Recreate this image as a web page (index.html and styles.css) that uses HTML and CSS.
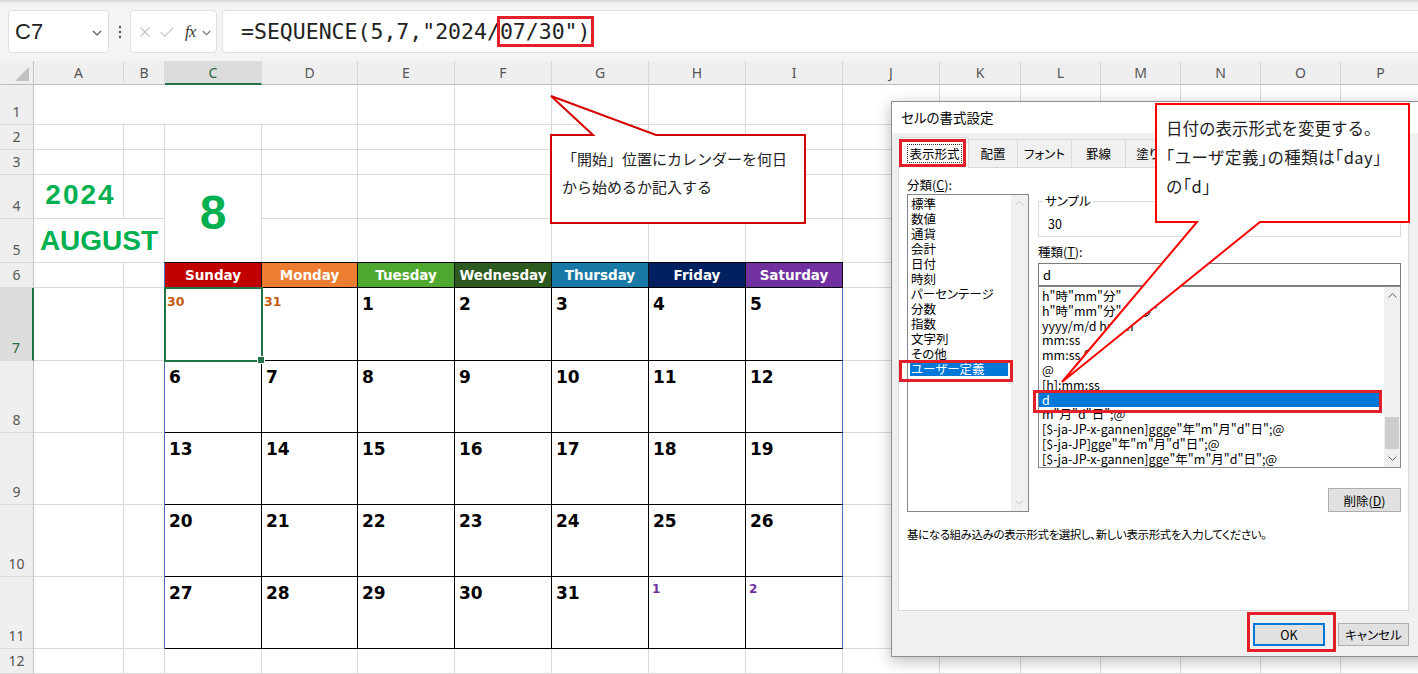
FILE: index.html
```html
<!DOCTYPE html>
<html lang="ja">
<head>
<meta charset="utf-8">
<title>カレンダー - セルの書式設定</title>
<link rel="stylesheet" href="styles.css">
</head>
<body>
<header class="fbar">
  <div class="box namebox">
    <span class="nb-text">C7</span>
    <svg class="chev" width="10" height="6" viewBox="0 0 10 6"><path d="M1 1l4 4 4-4" fill="none" stroke="#555" stroke-width="1.2"/></svg>
  </div>
  <div class="dots">
    <svg width="4" height="14" viewBox="0 0 4 14"><circle cx="2" cy="2" r="1.2" fill="#555"/><circle cx="2" cy="7" r="1.2" fill="#555"/><circle cx="2" cy="12" r="1.2" fill="#555"/></svg>
  </div>
  <div class="box fxbox">
    <svg class="ic-x" width="10" height="10" viewBox="0 0 10 10"><path d="M0.5 0.5l9 9M9.5 0.5l-9 9" stroke="#c4c4c4" stroke-width="1.2"/></svg>
    <svg class="ic-ok" width="14" height="10" viewBox="0 0 14 10"><path d="M0.8 5.2l4 4 8.4-8.6" fill="none" stroke="#c4c4c4" stroke-width="1.2"/></svg>
    <span class="fx">fx</span>
    <svg class="ic-dd" width="9" height="6" viewBox="0 0 9 6"><path d="M0.8 1l3.7 3.7 3.7-3.7" fill="none" stroke="#777" stroke-width="1.1"/></svg>
  </div>
  <div class="box formula"><span>=SEQUENCE(5,7,"2024/</span><span class="hl">07/30")</span></div>
</header>

<main class="sheet">
  <div class="corner"><span class="tri"></span></div>
  <div class="ch">A</div>
  <div class="ch">B</div>
  <div class="ch sel">C</div>
  <div class="ch">D</div>
  <div class="ch">E</div>
  <div class="ch">F</div>
  <div class="ch">G</div>
  <div class="ch">H</div>
  <div class="ch">I</div>
  <div class="ch">J</div>
  <div class="ch">K</div>
  <div class="ch">L</div>
  <div class="ch">M</div>
  <div class="ch">N</div>
  <div class="ch">O</div>
  <div class="ch">P</div>

  <div class="rh">1</div>
  <div class="cell merged-a1"></div>
  <i></i><i></i><i></i><i></i><i></i><i></i><i></i><i></i><i></i><i></i><i></i><i></i>

  <div class="rh">2</div>
  <i></i><i></i><i></i><i></i><i></i><i></i><i></i><i></i><i></i><i></i><i></i><i></i><i></i><i></i><i></i><i></i>

  <div class="rh">3</div>
  <i></i><i></i><i></i><i></i><i></i><i></i><i></i><i></i><i></i><i></i><i></i><i></i><i></i><i></i><i></i><i></i>

  <div class="rh">4</div>
  <div class="cell year">2024</div>
  <i></i>
  <div class="cell bignum">8</div>
  <i></i><i></i><i></i><i></i><i></i><i></i><i></i><i></i><i></i><i></i><i></i><i></i><i></i>

  <div class="rh">5</div>
  <div class="cell month">AUGUST</div>
  <i></i><i></i><i></i><i></i><i></i><i></i><i></i><i></i><i></i><i></i><i></i><i></i><i></i>

  <div class="rh">6</div>
  <i></i><i></i>
  <div class="cal">
    <div class="wd sun">Sunday</div>
    <div class="wd mon">Monday</div>
    <div class="wd tue">Tuesday</div>
    <div class="wd wed">Wednesday</div>
    <div class="wd thu">Thursday</div>
    <div class="wd fri">Friday</div>
    <div class="wd sat">Saturday</div>

    <div class="day prev sel">30</div>
    <div class="day prev">31</div>
    <div class="day">1</div>
    <div class="day">2</div>
    <div class="day">3</div>
    <div class="day">4</div>
    <div class="day">5</div>

    <div class="day">6</div>
    <div class="day">7</div>
    <div class="day">8</div>
    <div class="day">9</div>
    <div class="day">10</div>
    <div class="day">11</div>
    <div class="day">12</div>

    <div class="day">13</div>
    <div class="day">14</div>
    <div class="day">15</div>
    <div class="day">16</div>
    <div class="day">17</div>
    <div class="day">18</div>
    <div class="day">19</div>

    <div class="day">20</div>
    <div class="day">21</div>
    <div class="day">22</div>
    <div class="day">23</div>
    <div class="day">24</div>
    <div class="day">25</div>
    <div class="day">26</div>

    <div class="day">27</div>
    <div class="day">28</div>
    <div class="day">29</div>
    <div class="day">30</div>
    <div class="day">31</div>
    <div class="day next">1</div>
    <div class="day next">2</div>
  </div>
  <i></i><i></i><i></i><i></i><i></i><i></i><i></i>

  <div class="rh sel">7</div>
  <i></i><i></i><i></i><i></i><i></i><i></i><i></i><i></i><i></i>
  <div class="rh">8</div>
  <i></i><i></i><i></i><i></i><i></i><i></i><i></i><i></i><i></i>
  <div class="rh">9</div>
  <i></i><i></i><i></i><i></i><i></i><i></i><i></i><i></i><i></i>
  <div class="rh">10</div>
  <i></i><i></i><i></i><i></i><i></i><i></i><i></i><i></i><i></i>
  <div class="rh">11</div>
  <i></i><i></i><i></i><i></i><i></i><i></i><i></i><i></i><i></i>
  <div class="rh">12</div>
  <i></i><i></i><i></i><i></i><i></i><i></i><i></i><i></i><i></i><i></i><i></i><i></i><i></i><i></i><i></i><i></i>
</main>

<div class="callout callout1">
  <svg width="258" height="131" viewBox="0 0 258 131"><path d="M2 41H44L2 2L107 41H256V129H2Z" fill="#fff" stroke="#d40000" stroke-width="2" stroke-linejoin="miter"/></svg>
  <div class="ctext">「開始」位置にカレンダーを何日<br>から始めるか記入する</div>
</div>

<div class="dialog">
  <div class="dlg-title">セルの書式設定</div>
  <div class="tabs">
    <div class="tab active"><span class="focus">表示形式</span></div>
    <div class="tab t-align">配置</div>
    <div class="tab t-font">フォント</div>
    <div class="tab t-border">罫線</div>
    <div class="tab t-fill">塗りつぶし</div>
    <div class="tab t-prot">保護</div>
  </div>
  <div class="panel">
    <div class="cols">
      <div class="col-left">
        <div class="lbl">分類(<u>C</u>):</div>
        <div class="listbox cat">
          <ul class="items">
            <li>標準</li>
            <li>数値</li>
            <li>通貨</li>
            <li>会計</li>
            <li>日付</li>
            <li>時刻</li>
            <li>パーセンテージ</li>
            <li>分数</li>
            <li>指数</li>
            <li>文字列</li>
            <li>その他</li>
            <li class="selected">ユーザー定義</li>
          </ul>
          <div class="vscroll dim">
            <div class="arr"><svg width="9" height="5" viewBox="0 0 9 5"><path d="M0.6 4.4l3.9-3.8 3.9 3.8" fill="none" stroke="currentColor" stroke-width="1"/></svg></div>
            <div class="track"></div>
            <div class="arr"><svg width="9" height="5" viewBox="0 0 9 5"><path d="M0.6 0.6l3.9 3.8 3.9-3.8" fill="none" stroke="currentColor" stroke-width="1"/></svg></div>
          </div>
        </div>
      </div>
      <div class="col-right">
        <fieldset class="sample">
          <legend>サンプル</legend>
          <div class="sample-val">30</div>
        </fieldset>
        <div class="lbl2">種類(<u>T</u>):</div>
        <div class="input">d</div>
        <div class="listbox types">
          <ul class="items">
            <li>h"時"mm"分"</li>
            <li>h"時"mm"分"ss"秒"</li>
            <li>yyyy/m/d h:mm</li>
            <li>mm:ss</li>
            <li>mm:ss.0</li>
            <li>@</li>
            <li>[h]:mm:ss</li>
            <li class="selected">d</li>
            <li>m"月"d"日";@</li>
            <li>[$-ja-JP-x-gannen]ggge"年"m"月"d"日";@</li>
            <li>[$-ja-JP]gge"年"m"月"d"日";@</li>
            <li>[$-ja-JP-x-gannen]gge"年"m"月"d"日";@</li>
          </ul>
          <div class="vscroll">
            <div class="arr"><svg width="9" height="5" viewBox="0 0 9 5"><path d="M0.6 4.4l3.9-3.8 3.9 3.8" fill="none" stroke="currentColor" stroke-width="1"/></svg></div>
            <div class="track"><div class="thumb"></div></div>
            <div class="arr"><svg width="9" height="5" viewBox="0 0 9 5"><path d="M0.6 0.6l3.9 3.8 3.9-3.8" fill="none" stroke="currentColor" stroke-width="1"/></svg></div>
          </div>
        </div>
        <button class="btn del">削除(<u>D</u>)</button>
      </div>
    </div>
    <p class="desc">基になる組み込みの表示形式を選択し、新しい表示形式を入力してください。</p>
  </div>
  <div class="btnrow">
    <button class="btn ok">OK</button>
    <button class="btn cancel">キャンセル</button>
  </div>
  <div class="ann ann-tab"></div>
  <div class="ann ann-cat"></div>
  <div class="ann ann-d"></div>
  <div class="ann ann-ok"></div>
</div>

<div class="callout callout2">
  <svg width="351" height="282" viewBox="0 0 351 282"><path d="M96 2H349V120H200L2 280L137 120H96Z" fill="#fff" stroke="#ff0000" stroke-width="2" stroke-linejoin="miter"/></svg>
  <div class="ctext">日付の表示形式を変更する。<br><span class="tight">「ユーザ定義」の種類は「day」</span><br><span class="tight">の「d」</span></div>
</div>
</body>
</html>
```

FILE: styles.css
```css
* { box-sizing: border-box; }
html, body { margin: 0; padding: 0; }
body {
  width: 1418px;
  height: 674px;
  overflow: hidden;
  position: relative;
  background: #fff;
  font-family: "Noto Sans", "Noto Sans CJK JP", sans-serif;
  color: #222;
}

/* ---------- formula bar ---------- */
.fbar {
  height: 61px;
  display: flex;
  align-items: flex-start;
  padding: 10px 0 0 8px;
  background: linear-gradient(#d4d4d4 0, #e9e9e9 2px, #f4f4f4 5px, #f4f4f4 100%);
}
.box {
  height: 43px;
  background: #fff;
  border: 1px solid #e0e0e0;
  border-radius: 4px;
  display: flex;
  align-items: center;
}
.namebox { width: 101px; padding: 0 6px 0 6px; justify-content: space-between; }
.nb-text { font: 22px "Liberation Sans", Arial, sans-serif; color: #222; }
.chev { margin-top: 2px; }
.dots { width: 21px; height: 43px; display: flex; align-items: center; justify-content: center; }
.fxbox { width: 87px; padding-left: 9px; }
.ic-ok { margin-left: 10px; }
.fx {
  margin-left: 11px;
  font: italic 16px "Liberation Serif", "DejaVu Serif", serif;
  color: #333;
  letter-spacing: -0.5px;
}
.ic-dd { margin-left: 6px; margin-top: 2px; }
.formula {
  flex: 1;
  margin-left: 5px;
  padding-left: 18px;
  border-right: 0;
  border-radius: 4px 0 0 4px;
  font: 21.5px "DejaVu Sans Mono", "Liberation Mono", monospace;
  color: #222;
  white-space: nowrap;
}
.hl { outline: 3px solid #e3202a; }

/* ---------- sheet ---------- */
.sheet {
  display: grid;
  grid-template-columns: 34px 90px 41px 97px 96px 97px 97px 97px 97px 97px 97px 81px 80px 80px 80px 80px 80px;
  grid-template-rows: 24px 40px 25px 25px 44px 44px 25px 73px 72px 72px 72px 72px 25px;
  width: 1418px;
  height: 613px;
  overflow: hidden;
}
.sheet > i, .cell {
  display: block;
  background: #fff;
  border-right: 1px solid #dadada;
  border-bottom: 1px solid #dadada;
}
.corner {
  background: #efefef;
  border-right: 1px solid #c4c4c4;
  border-bottom: 1px solid #bdbdbd;
  display: flex;
  justify-content: flex-end;
  align-items: flex-end;
  padding: 0 4px 3px 0;
}
.tri {
  width: 0;
  height: 0;
  border-left: 14px solid transparent;
  border-bottom: 14px solid #c2c2c2;
}
.ch {
  background: #efefef;
  border-right: 1px solid #d9d9d9;
  border-bottom: 1px solid #bdbdbd;
  display: flex;
  align-items: center;
  justify-content: center;
  font-size: 14px;
  color: #555;
}
.ch.sel { background: #dcdcdc; border-bottom: 2px solid #217346; color: #1e6b41; }
.rh {
  background: #efefef;
  border-right: 1px solid #c4c4c4;
  border-bottom: 1px solid #dadada;
  display: flex;
  align-items: flex-end;
  justify-content: center;
  font-size: 14px;
  line-height: 25px;
  color: #555;
}
.rh.sel { background: #dcdcdc; border-right: 2px solid #217346; color: #1e6b41; }

.merged-a1 { grid-row: 2; grid-column: 2 / 6; }
.year {
  grid-row: 5;
  grid-column: 2;
  display: flex;
  align-items: center;
  justify-content: center;
  padding: 0 0 3px 4px;
  font: bold 28px "Liberation Sans", Arial, sans-serif;
  letter-spacing: 2px;
  color: #00b050;
}
.month {
  grid-row: 6;
  grid-column: 2 / 4;
  display: flex;
  align-items: center;
  justify-content: center;
  padding-top: 1px;
  font: bold 28px "Liberation Sans", Arial, sans-serif;
  color: #00b050;
}
.bignum {
  grid-row: 5 / 7;
  grid-column: 4;
  display: flex;
  align-items: center;
  justify-content: center;
  padding-bottom: 12px;
  font: bold 48px "Liberation Sans", Arial, sans-serif;
  color: #00b050;
}

/* ---------- calendar ---------- */
.cal {
  grid-row: 7 / 13;
  grid-column: 4 / 11;
  margin: -1px 0 0 -1px;
  border-top: 1px solid #000;
  border-left: 1px solid #4a72b8;
  display: grid;
  grid-template-columns: 97px 96px 97px 97px 97px 97px 97px;
  grid-template-rows: 25px 73px 72px 72px 72px 72px;
  background: #fff;
  position: relative;
  z-index: 1;
  font-family: "DejaVu Sans", Verdana, sans-serif;
  font-weight: bold;
}
.wd {
  border-right: 1px solid #111;
  border-bottom: 1px solid #000;
  color: #fff;
  font-size: 13.5px;
  display: flex;
  align-items: center;
  justify-content: center;
  padding-bottom: 1px;
}
.sun { background: #c00000; }
.mon { background: #ed7d31; }
.tue { background: #4ea72e; }
.wed { background: #2d5a1e; }
.thu { background: #1979a6; }
.fri { background: #002060; }
.sat { background: #7030a0; }
.day {
  border-right: 1px solid #000;
  border-bottom: 1px solid #000;
  font-size: 17px;
  line-height: 20px;
  padding: 6px 0 0 4px;
  color: #000;
}
.day:nth-child(7n) { border-right-color: #4a72b8; }
.day:nth-child(n+43) { border-bottom-color: #4a72b8; }
.day.prev { color: #c55a11; font-size: 12.5px; line-height: 15px; padding: 6px 0 0 2px; }
.day.next { color: #7030a0; font-size: 12px; line-height: 15px; padding: 5px 0 0 3px; }
.day.sel {
  position: relative;
  z-index: 2;
  outline: 2px solid #217346;
  outline-offset: -1px;
}
.day.sel::after {
  content: "";
  position: absolute;
  right: -4px;
  bottom: -4px;
  width: 6px;
  height: 6px;
  background: #217346;
  border: 1px solid #fff;
}

/* ---------- callouts ---------- */
.callout { position: absolute; }
.callout svg { position: absolute; left: 0; top: 0; }
.ctext {
  position: relative;
  font-family: "Noto Sans CJK JP", sans-serif;
  color: #222;
  white-space: nowrap;
}
.callout1 { left: 549px; top: 94px; width: 258px; height: 131px; z-index: 4; }
.callout1 .ctext { padding: 51px 0 0 13px; font-size: 15px; line-height: 28px; }
.callout2 { left: 1060px; top: 102px; width: 351px; height: 282px; z-index: 6; }
.callout2 .ctext { padding: 12px 0 0 106px; font-size: 16.5px; line-height: 29px; }
.tight { font-feature-settings: "halt"; letter-spacing: 0.4px; }

/* ---------- dialog ---------- */
.dialog {
  position: absolute;
  left: 891px;
  top: 101px;
  width: 540px;
  height: 556px;
  border: 1px solid #8e8e8e;
  background: #f0f0f0;
  box-shadow: 0 4px 14px rgba(0, 0, 0, 0.28);
  z-index: 5;
  font-family: "Noto Sans CJK JP", sans-serif;
  font-size: 12.5px;
  color: #000;
  font-feature-settings: "palt";
}
.dlg-title {
  height: 31px;
  line-height: 31px;
  background: #fff;
  padding-left: 9px;
  font-size: 13.5px;
}
.tabs {
  height: 34px;
  display: flex;
  align-items: flex-end;
  padding: 4px 0 0 8px;
}
.tab {
  height: 28px;
  border: 1px solid #d9d9d9;
  border-bottom: 0;
  margin-left: -1px;
  background: #f0f0f0;
  display: flex;
  align-items: center;
  justify-content: center;
  font-size: 12.5px;
}
.tab.active {
  width: 69px;
  height: 31px;
  margin-left: 0;
  margin-bottom: -1px;
  background: #fff;
  position: relative;
  z-index: 1;
}
.focus { outline: 1px dotted #333; outline-offset: 1px; line-height: 15px; }
.t-align { width: 50px; }
.t-font { width: 55px; }
.t-border { width: 55px; }
.t-fill { width: 80px; }
.t-prot { width: 50px; }

.panel {
  margin-left: 6px;
  width: 511px;
  height: 444px;
  background: #fff;
  border: 1px solid #d9d9d9;
  padding: 7px 0 0 8px;
}
.cols { display: flex; }
.col-left { width: 122px; }
.col-right { width: 363px; margin-left: 9px; display: flex; flex-direction: column; }
.lbl { height: 19px; line-height: 19px; }
.listbox {
  display: flex;
  border: 1px solid #828790;
  background: #fff;
  overflow: hidden;
}
.cat { height: 318px; }
.items {
  list-style: none;
  margin: 0;
  padding: 1px 3px 0 2px;
  flex: 1;
  min-width: 0;
  line-height: 15px;
}
.items li { padding-left: 1px; white-space: nowrap; }
.items li.selected { background: #0078d7; color: #fff; }
.vscroll {
  width: 17px;
  background: #f0f0f0;
  display: flex;
  flex-direction: column;
  color: #606060;
}
.vscroll.dim { color: #c4c4c4; }
.arr { height: 17px; display: flex; align-items: center; justify-content: center; }
.track { flex: 1; display: flex; flex-direction: column; justify-content: flex-end; padding: 0 1px 1px; }
.thumb { height: 32px; background: #cdcdcd; }

.sample {
  margin: 19px 0 0;
  padding: 0 4px 4px;
  border: 1px solid #dcdcdc;
  min-width: 0;
}
.sample legend { padding: 0 2px; line-height: 14px; }
.sample-val { padding: 8px 0 0 5px; line-height: 16px; }
.lbl2 { margin-top: 7px; line-height: 16px; }
.input {
  margin-top: 3px;
  height: 23px;
  border: 1px solid #7a7a7a;
  padding-left: 4px;
  line-height: 21px;
  font-size: 13px;
}
.types { height: 182px; }
.types .vscroll { width: 16px; }
.types .items { padding: 2px 5px 0 0; font-size: 12.5px; line-height: 14.8px; }
.types .items li { padding-left: 3px; }
.btn {
  background: #e1e1e1;
  border: 1px solid #adadad;
  font-family: inherit;
  font-size: 12.5px;
  font-feature-settings: "palt";
  color: #000;
  padding: 0;
}
.del { align-self: flex-end; margin-top: 20px; width: 73px; height: 24px; }
.desc { margin: 14px 0 0; line-height: 16px; font-size: 11.5px; letter-spacing: -0.4px; }
.btnrow {
  margin: 12px 0 0 6px;
  width: 511px;
  display: flex;
  justify-content: flex-end;
  gap: 13px;
}
.ok { width: 72px; height: 23px; border-color: #0078d7; box-shadow: inset 0 0 0 1px #0078d7; }
.cancel { width: 71px; height: 23px; }

.ann { position: absolute; border: 3px solid #e3202a; z-index: 3; }
.ann-tab { left: 7px; top: 37px; width: 67px; height: 28px; }
.ann-cat { left: 7px; top: 258px; width: 114px; height: 22px; }
.ann-d { left: 141px; top: 288px; width: 349px; height: 23px; }
.ann-ok { left: 355px; top: 510px; width: 89px; height: 40px; }
```
